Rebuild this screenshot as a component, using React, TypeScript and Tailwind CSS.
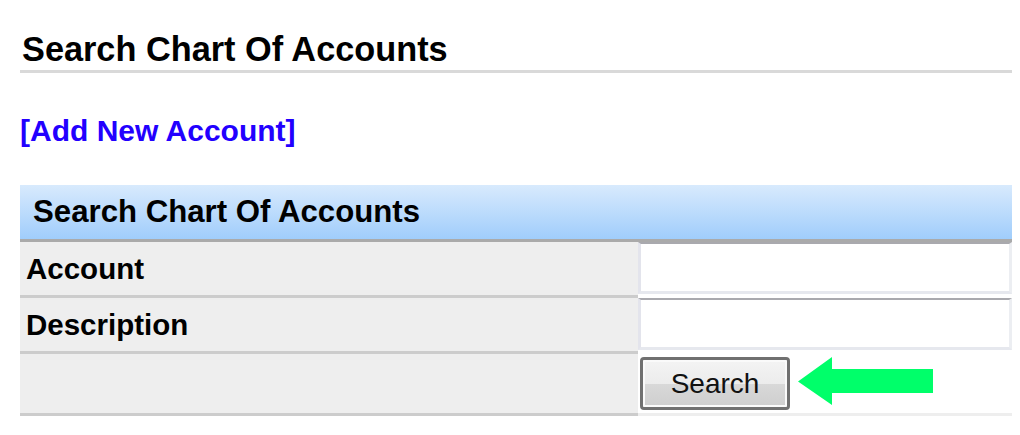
import React from "react";

export default function App() {
  return (
    <div
      className="w-[1020px] h-[435px] bg-white overflow-hidden"
      style={{ fontFamily: '"Liberation Sans", Arial, sans-serif' }}
    >
      <div className="pt-[32px] pl-[22px]">
        <div className="text-[34.3px] leading-[34px] h-[34px] font-bold text-black whitespace-nowrap">
          Search Chart Of Accounts
        </div>
      </div>
      <div className="ml-[20px] mt-[4px] w-[992px] h-[3px] bg-[#d9d9d9]" />
      <div className="ml-[20px] mt-[43px] h-[30px] flex items-center">
        <a className="text-[30px] leading-none font-bold text-[#2200ff] whitespace-nowrap cursor-pointer">
          [Add New Account]
        </a>
      </div>
      <div className="ml-[20px] mt-[39px] w-[992px]">
        <div className="h-[57px] border-b-[3px] border-[#aaaaaa] bg-gradient-to-b from-[#d8eafd] to-[#a0cdfb] flex items-center pl-[13px]">
          <span className="text-[31.2px] leading-none font-bold text-black whitespace-nowrap">
            Search Chart Of Accounts
          </span>
        </div>
        {["Account", "Description"].map((label) => (
          <div key={label} className="flex h-[56px]">
            <div className="w-[618px] bg-[#eeeeee] border-b-[3px] border-[#cccccc] flex items-center pl-[6px]">
              <span className="text-[29.5px] leading-none font-bold text-black">{label}</span>
            </div>
            <div className="flex-1 bg-white">
              <div className="h-[52px] bg-white border-t-2 border-t-[#a9a9ae] border-l-[3px] border-l-[#e3e4ec] border-b-[3px] border-b-[#e6e8ee] border-r-[3px] border-r-[#eceef2]" />
            </div>
          </div>
        ))}
        <div className="flex h-[62px]">
          <div className="w-[618px] bg-[#eeeeee] border-b-[3px] border-[#cccccc]" />
          <div className="flex-1 bg-white border-b-[3px] border-[#eeeeee] flex items-start pt-[3px] pl-[2px]">
            <button className="w-[150px] h-[53px] rounded-[4px] border-[3px] border-[#707070] p-0 overflow-hidden">
              <div className="w-full h-full border-2 border-[#fafafa] rounded-[2px] bg-[linear-gradient(to_bottom,#f3f3f3_0%,#ececec_50%,#d9d9d9_50%,#cfcfcf_100%)] flex items-center justify-center">
                <span className="text-[28px] leading-none text-[#111111]">Search</span>
              </div>
            </button>
            <svg width="136" height="49" viewBox="0 0 136 49" className="ml-[8px]">
              <polygon points="0,24.5 34,0 34,12 135,12 135,36 34,36 34,48" fill="#00ff6a" />
            </svg>
          </div>
        </div>
      </div>
    </div>
  );
}
